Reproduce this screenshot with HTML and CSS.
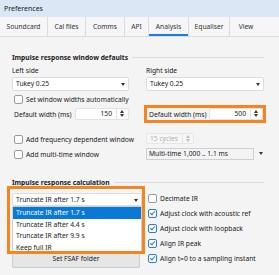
FILE: index.html
```html
<!DOCTYPE html>
<html lang="en">
<head>
<meta charset="UTF-8">
<title>Preferences</title>
<link rel="stylesheet" href="styles.css">
</head>
<body>
<div class="titlebar">Preferences</div>
<div class="tabs">
  <div class="tab tabSoundcard">Soundcard</div>
  <div class="tab tabCal">Cal files</div>
  <div class="tab tabComms">Comms</div>
  <div class="tab tabApi">API</div>
  <div class="tab tabAnalysis active">Analysis</div>
  <div class="tab tabEq">Equaliser</div>
  <div class="tab tabView">View</div>
</div>
<div class="page">
  <div class="groupTitle"><span>Impulse response window defaults</span><i class="rule"></i></div>
  <div class="cols">
    <div class="label">Left side</div>
    <div class="label">Right side</div>

    <div class="combo">Tukey 0.25<span class="arrow"></span></div>
    <div class="combo">Tukey 0.25<span class="arrow"></span></div>

    <div class="check"><span class="box"></span>Set window widths automatically</div>
    <div></div>

    <div class="spinRow"><span>Default width (ms)</span><div class="spin"><span class="val">150</span><span class="updown"></span></div></div>
    <div class="spinRow marked"><span>Default width (ms)</span><div class="spin"><span class="val">500</span><span class="updown"></span></div></div>

    <div class="check rowFreq"><span class="box"></span>Add frequency dependent window</div>
    <div class="rowFreq"><div class="spin disabled"><span class="val">15 cycles</span><span class="updown"></span></div></div>

    <div class="check rowMulti"><span class="box"></span>Add multi-time window</div>
    <div class="rowMulti multi"><div class="flatCombo">Multi-time 1,000 .. 1.1 ms</div><span class="arrow"></span></div>
  </div>

  <div class="groupTitle second"><span>Impulse response calculation</span><i class="rule"></i></div>
  <div class="cols bottom">
    <div class="leftCol">
      <div class="combo wide">Truncate IR after 1.7 s<span class="arrow"></span></div>
      <div class="button">Set FSAF folder</div>
      <div class="popup">
        <div class="item selected">Truncate IR after 1.7 s</div>
        <div class="item">Truncate IR after 4.4 s</div>
        <div class="item">Truncate IR after 9.9 s</div>
        <div class="item">Keep full IR</div>
      </div>
      <div class="mark"></div>
    </div>
    <div class="rightCol">
      <div class="check tall"><span class="box"></span>Decimate IR</div>
      <div class="check tall"><span class="box on"></span>Adjust clock with acoustic ref</div>
      <div class="check tall"><span class="box on"></span>Adjust clock with loopback</div>
      <div class="check tall"><span class="box on"></span>Align IR peak</div>
      <div class="check tall"><span class="box on"></span>Align t=0 to a sampling instant</div>
    </div>
  </div>
</div>
</body>
</html>
```

FILE: styles.css
```css
body {
	margin: 0;
	width: 279px;
	height: 275px;
	overflow: hidden;
	background: #f4f4f4;
	font-family: 'Noto Sans', sans-serif;
	font-size: 6.7px;
	color: #202020;
	white-space: nowrap;
}
.titlebar {
	height: 17px;
	line-height: 17px;
	padding-left: 4px;
	background: #dce7f5;
	font-size: 7px;
}
.tabs {
	display: flex;
	height: 19px;
	border-bottom: 1px solid #dcdcdc;
	background: #f6f6f6;
}
.tab {
	box-sizing: border-box;
	border-right: 1px solid #dcdcdc;
	text-align: center;
	line-height: 19px;
	color: #333;
}
.tab.active {
	box-shadow: inset 0 -2px #1f7ae8;
}
.tabSoundcard { width: 48px; }
.tabCal { width: 38px; }
.tabComms { width: 39px; }
.tabApi { width: 24px; }
.tabAnalysis { width: 40px; }
.tabEq { width: 41px; }
.tabView { width: 32px; border-right: none; }

.page {
	padding: 0 15px 0 12px;
}
.groupTitle {
	display: flex;
	align-items: center;
	height: 12px;
	margin-top: 14px;
	font-weight: bold;
}
.groupTitle.second {
	margin-top: 16px;
}
.rule {
	flex: 1;
	margin-left: 4px;
	border-top: 1px solid #dadada;
}
.cols {
	display: grid;
	grid-template-columns: 117px 118px;
	column-gap: 17px;
}
.label {
	height: 12px;
	line-height: 12px;
	margin-top: 2px;
}
.combo {
	position: relative;
	box-sizing: border-box;
	height: 14px;
	line-height: 12px;
	padding-left: 3px;
	background: #fff;
	border: 1px solid #dcdcdc;
	border-radius: 2px;
}
.arrow {
	position: absolute;
	right: 3px;
	top: 5px;
	border-left: 2.5px solid transparent;
	border-right: 2.5px solid transparent;
	border-top: 3px solid #333;
}
.check {
	display: flex;
	align-items: center;
	height: 12px;
	margin-top: 2px;
	padding-left: 2px;
}
.box {
	box-sizing: border-box;
	flex: none;
	width: 9px;
	height: 9px;
	margin-right: 3px;
	background: #fff;
	border: 1px solid #9a9a9a;
	border-radius: 2px;
	position: relative;
}
.box.on {
	border-color: #2b7ad8;
}
.box.on::after {
	content: '';
	position: absolute;
	left: 2px;
	top: 0px;
	width: 2px;
	height: 4px;
	border-right: 1.3px solid #2b7ad8;
	border-bottom: 1.3px solid #2b7ad8;
	transform: rotate(40deg);
}
.spinRow {
	display: flex;
	align-items: center;
	justify-content: space-between;
	height: 18px;
	padding-left: 2px;
}
.spinRow.marked {
	box-sizing: border-box;
	margin: 0 -2px;
	border: 3px solid #f7851f;
	padding-left: 2px;
}
.spin {
	display: flex;
	box-sizing: border-box;
	width: 54px;
	height: 12px;
	background: #fff;
	border: 1px solid #e2e2e2;
	border-radius: 2px;
}
.val {
	flex: 1;
	text-align: right;
	line-height: 10px;
	padding-right: 4px;
}
.updown {
	position: relative;
	width: 11px;
	border-left: 1px solid #e2e2e2;
}
.updown::before,
.updown::after {
	content: '';
	position: absolute;
	left: 3px;
	border-left: 2.5px solid transparent;
	border-right: 2.5px solid transparent;
}
.updown::before {
	top: 1px;
	border-bottom: 3px solid #333;
}
.updown::after {
	top: 5px;
	border-top: 3px solid #333;
}
.rowFreq {
	margin-top: 10px;
	height: 12px;
}
.rowMulti {
	margin-top: 3px;
	height: 12px;
}
.spin.disabled {
	width: 48px;
	height: 11px;
	border-color: #e6e6e6;
	background: #f7f7f7;
	color: #b0b0b0;
}
.spin.disabled .val {
	text-align: left;
	padding-left: 3px;
}
.spin.disabled .updown::before { border-bottom-color: #bbb; }
.spin.disabled .updown::after { border-top-color: #bbb; }
.multi {
	position: relative;
	display: flex;
}
.flatCombo {
	box-sizing: border-box;
	width: 108px;
	height: 12px;
	line-height: 10px;
	padding-left: 2px;
	border: 1px solid #cfcfcf;
}
.multi .arrow {
	right: 1px;
	top: 4px;
}

.bottom {
	margin-top: 3px;
}
.leftCol {
	position: relative;
	padding-top: 2px;
}
.combo.wide {
	width: 130px;
	height: 13px;
	line-height: 11px;
}
.button {
	box-sizing: border-box;
	width: 128px;
	height: 18px;
	margin-top: 44px;
	line-height: 16px;
	text-align: center;
	background: #e6e6e6;
	border: 1px solid #cccccc;
	border-radius: 2px;
}
.popup {
	position: absolute;
	left: 0;
	top: 15px;
	width: 130px;
	box-sizing: border-box;
	background: #fff;
	border: 1px solid #cfcfcf;
}
.item {
	height: 11.5px;
	line-height: 11.5px;
	padding-left: 3px;
}
.item.selected {
	background: #0a78d7;
	color: #fff;
}
.mark {
	position: absolute;
	left: -5px;
	top: -5px;
	width: 138px;
	height: 68px;
	box-sizing: border-box;
	border: 3px solid #f7851f;
}
.rightCol {
	padding-top: 0;
}
.check.tall {
	height: 15px;
	margin-top: 0;
}
```
